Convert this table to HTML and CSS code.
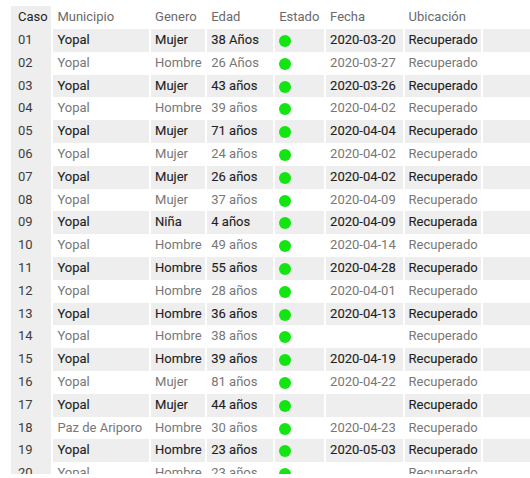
FILE: index.html
```html
<!DOCTYPE html>
<html lang="es">
<head>
<meta charset="utf-8">
<link rel="stylesheet" href="styles.css">
</head>
<body>
<div class="wrap">
<table class="casos">
<colgroup>
<col class="c-caso"><col class="c-mun"><col class="c-gen"><col class="c-edad"><col class="c-est"><col class="c-fec"><col class="c-ubi"><col class="c-x">
</colgroup>
<thead>
<tr><th class="caso">Caso</th><th>Municipio</th><th>Genero</th><th>Edad</th><th>Estado</th><th>Fecha</th><th>Ubicación</th><th></th></tr>
</thead>
<tbody>
<tr class="odd"><td class="caso">01</td><td>Yopal</td><td>Mujer</td><td>38 Años</td><td><span class="dot"></span></td><td>2020-03-20</td><td>Recuperado</td><td></td></tr>
<tr class="even"><td class="caso">02</td><td>Yopal</td><td>Hombre</td><td>26 Años</td><td><span class="dot"></span></td><td>2020-03-27</td><td>Recuperado</td><td></td></tr>
<tr class="odd"><td class="caso">03</td><td>Yopal</td><td>Mujer</td><td>43 años</td><td><span class="dot"></span></td><td>2020-03-26</td><td>Recuperado</td><td></td></tr>
<tr class="even"><td class="caso">04</td><td>Yopal</td><td>Hombre</td><td>39 años</td><td><span class="dot"></span></td><td>2020-04-02</td><td>Recuperado</td><td></td></tr>
<tr class="odd"><td class="caso">05</td><td>Yopal</td><td>Mujer</td><td>71 años</td><td><span class="dot"></span></td><td>2020-04-04</td><td>Recuperado</td><td></td></tr>
<tr class="even"><td class="caso">06</td><td>Yopal</td><td>Mujer</td><td>24 años</td><td><span class="dot"></span></td><td>2020-04-02</td><td>Recuperado</td><td></td></tr>
<tr class="odd"><td class="caso">07</td><td>Yopal</td><td>Mujer</td><td>26 años</td><td><span class="dot"></span></td><td>2020-04-02</td><td>Recuperado</td><td></td></tr>
<tr class="even"><td class="caso">08</td><td>Yopal</td><td>Mujer</td><td>37 años</td><td><span class="dot"></span></td><td>2020-04-09</td><td>Recuperado</td><td></td></tr>
<tr class="odd"><td class="caso">09</td><td>Yopal</td><td>Niña</td><td>4 años</td><td><span class="dot"></span></td><td>2020-04-09</td><td>Recuperada</td><td></td></tr>
<tr class="even"><td class="caso">10</td><td>Yopal</td><td>Hombre</td><td>49 años</td><td><span class="dot"></span></td><td>2020-04-14</td><td>Recuperado</td><td></td></tr>
<tr class="odd"><td class="caso">11</td><td>Yopal</td><td>Hombre</td><td>55 años</td><td><span class="dot"></span></td><td>2020-04-28</td><td>Recuperado</td><td></td></tr>
<tr class="even"><td class="caso">12</td><td>Yopal</td><td>Hombre</td><td>28 años</td><td><span class="dot"></span></td><td>2020-04-01</td><td>Recuperado</td><td></td></tr>
<tr class="odd"><td class="caso">13</td><td>Yopal</td><td>Hombre</td><td>36 años</td><td><span class="dot"></span></td><td>2020-04-13</td><td>Recuperado</td><td></td></tr>
<tr class="even"><td class="caso">14</td><td>Yopal</td><td>Hombre</td><td>38 años</td><td><span class="dot"></span></td><td></td><td>Recuperado</td><td></td></tr>
<tr class="odd"><td class="caso">15</td><td>Yopal</td><td>Hombre</td><td>39 años</td><td><span class="dot"></span></td><td>2020-04-19</td><td>Recuperado</td><td></td></tr>
<tr class="even"><td class="caso">16</td><td>Yopal</td><td>Mujer</td><td>81 años</td><td><span class="dot"></span></td><td>2020-04-22</td><td>Recuperado</td><td></td></tr>
<tr class="odd"><td class="caso">17</td><td>Yopal</td><td>Mujer</td><td>44 años</td><td><span class="dot"></span></td><td></td><td>Recuperado</td><td></td></tr>
<tr class="even"><td class="caso">18</td><td>Paz de Ariporo</td><td>Hombre</td><td>30 años</td><td><span class="dot"></span></td><td>2020-04-23</td><td>Recuperado</td><td></td></tr>
<tr class="odd"><td class="caso">19</td><td>Yopal</td><td>Hombre</td><td>23 años</td><td><span class="dot"></span></td><td>2020-05-03</td><td>Recuperado</td><td></td></tr>
<tr class="even"><td class="caso">20</td><td>Yopal</td><td>Hombre</td><td>23 años</td><td><span class="dot"></span></td><td></td><td>Recuperado</td><td></td></tr>
</tbody>
</table>
</div>
</body>
</html>
```

FILE: styles.css
```css
html, body {
  margin: 0;
  background: #ffffff;
}
body {
  padding: 6px 0 0 11px;
  font-family: Roboto, "Liberation Sans", sans-serif;
  font-size: 13px;
  overflow: hidden;
}
.wrap {
  height: 468px;
  width: 519px;
  overflow: hidden;
}
.casos {
  table-layout: fixed;
  width: 540px;
  border-collapse: separate;
  border-spacing: 2px 0;
  margin-left: -2px;
}
.c-caso { width: 38px; }
.c-mun { width: 90px; }
.c-gen { width: 51px; }
.c-edad { width: 62px; }
.c-est { width: 46px; }
.c-fec { width: 72px; }
.c-ubi { width: 72px; }
.c-x { width: 60px; }
th, td {
  padding: 0 0 0 4px;
  height: 22.8px;
  line-height: 22.8px;
  text-align: left;
  white-space: nowrap;
  overflow: hidden;
}
th {
  font-weight: 400;
  color: #6a6a6a;
  height: 23px;
}
th.caso {
  color: #1e1e1e;
}
.caso {
  background: #eeeeee;
  padding-left: 7px;
}
.odd td {
  background: #eeeeee;
  color: #1f1f1f;
  font-weight: 400;
  -webkit-text-stroke: 0.12px #1f1f1f;
}
.even td {
  color: #777777;
}
.odd td.caso, .even td.caso {
  color: #3c3c3c;
  -webkit-text-stroke: 0;
}
.dot {
  display: inline-block;
  width: 12px;
  height: 12px;
  border-radius: 50%;
  background: #12e512;
  vertical-align: -3px;
}
```
